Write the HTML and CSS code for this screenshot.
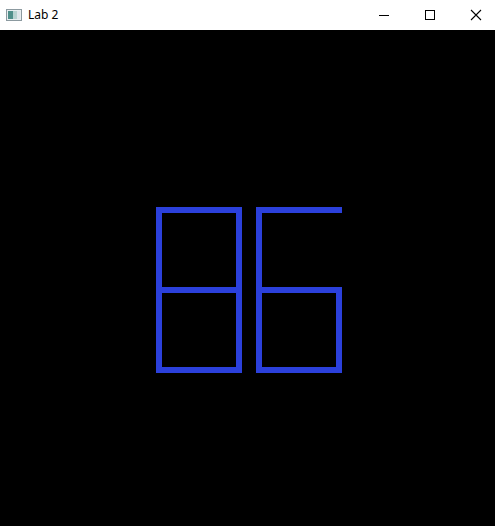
FILE: index.html
```html
<!DOCTYPE html>
<html>
<head>
<meta charset="utf-8">
<link rel="stylesheet" href="styles.css">
</head>
<body>
<div class="window">
  <div class="titlebar">
    <svg class="app-icon" width="16" height="16" viewBox="0 0 16 16">
      <rect x="0.5" y="2.5" width="15" height="11" fill="#e8eef0" stroke="#8c9aa0"/>
      <rect x="2" y="4" width="5" height="8" fill="#4f8f8a"/>
      <rect x="7" y="4" width="4" height="8" fill="#b7d2d0"/>
      <rect x="11" y="4" width="3" height="8" fill="#dfe6ea"/>
    </svg>
    <span class="title">Lab 2</span>
    <div class="controls">
      <div class="ctl">
        <svg width="12" height="12" viewBox="0 0 12 12"><rect x="1" y="6" width="10" height="1" fill="#000"/></svg>
      </div>
      <div class="ctl">
        <svg width="12" height="12" viewBox="0 0 12 12"><rect x="1.5" y="1.5" width="9" height="9" fill="none" stroke="#000"/></svg>
      </div>
      <div class="ctl">
        <svg width="12" height="12" viewBox="0 0 12 12"><path d="M1 1 L11 11 M11 1 L1 11" stroke="#000" stroke-width="1.1" fill="none"/></svg>
      </div>
    </div>
  </div>
  <div class="canvas">
    <svg class="digits" width="495" height="496" viewBox="0 30 495 496">
      <g fill="#2b40db">
        <rect x="156" y="207" width="86" height="6"/>
        <rect x="156" y="287" width="86" height="6"/>
        <rect x="156" y="367" width="86" height="6"/>
        <rect x="156" y="207" width="6" height="166"/>
        <rect x="236" y="207" width="6" height="166"/>
        <rect x="256" y="207" width="86" height="6"/>
        <rect x="256" y="287" width="86" height="6"/>
        <rect x="256" y="367" width="86" height="6"/>
        <rect x="256" y="207" width="6" height="166"/>
        <rect x="336" y="287" width="6" height="86"/>
      </g>
    </svg>
  </div>
</div>
</body>
</html>
```
FILE: styles.css
```css
html, body {
  margin: 0;
  padding: 0;
  background: #000;
}
.window {
  width: 495px;
  height: 526px;
  display: flex;
  flex-direction: column;
  overflow: hidden;
}
.titlebar {
  height: 30px;
  flex: none;
  background: #fff;
  display: flex;
  align-items: center;
  padding-left: 6px;
  font-family: "Noto Sans", "Liberation Sans", sans-serif;
  font-size: 12px;
  color: #000;
}
.app-icon {
  display: block;
  margin-right: 6px;
}
.title {
  line-height: 16px;
}
.controls {
  margin-left: auto;
  margin-right: -4px;
  display: flex;
  height: 100%;
}
.ctl {
  width: 46px;
  height: 100%;
  display: flex;
  align-items: center;
  justify-content: center;
}
.canvas {
  flex: 1;
  background: #000;
}
.digits {
  display: block;
}
```
